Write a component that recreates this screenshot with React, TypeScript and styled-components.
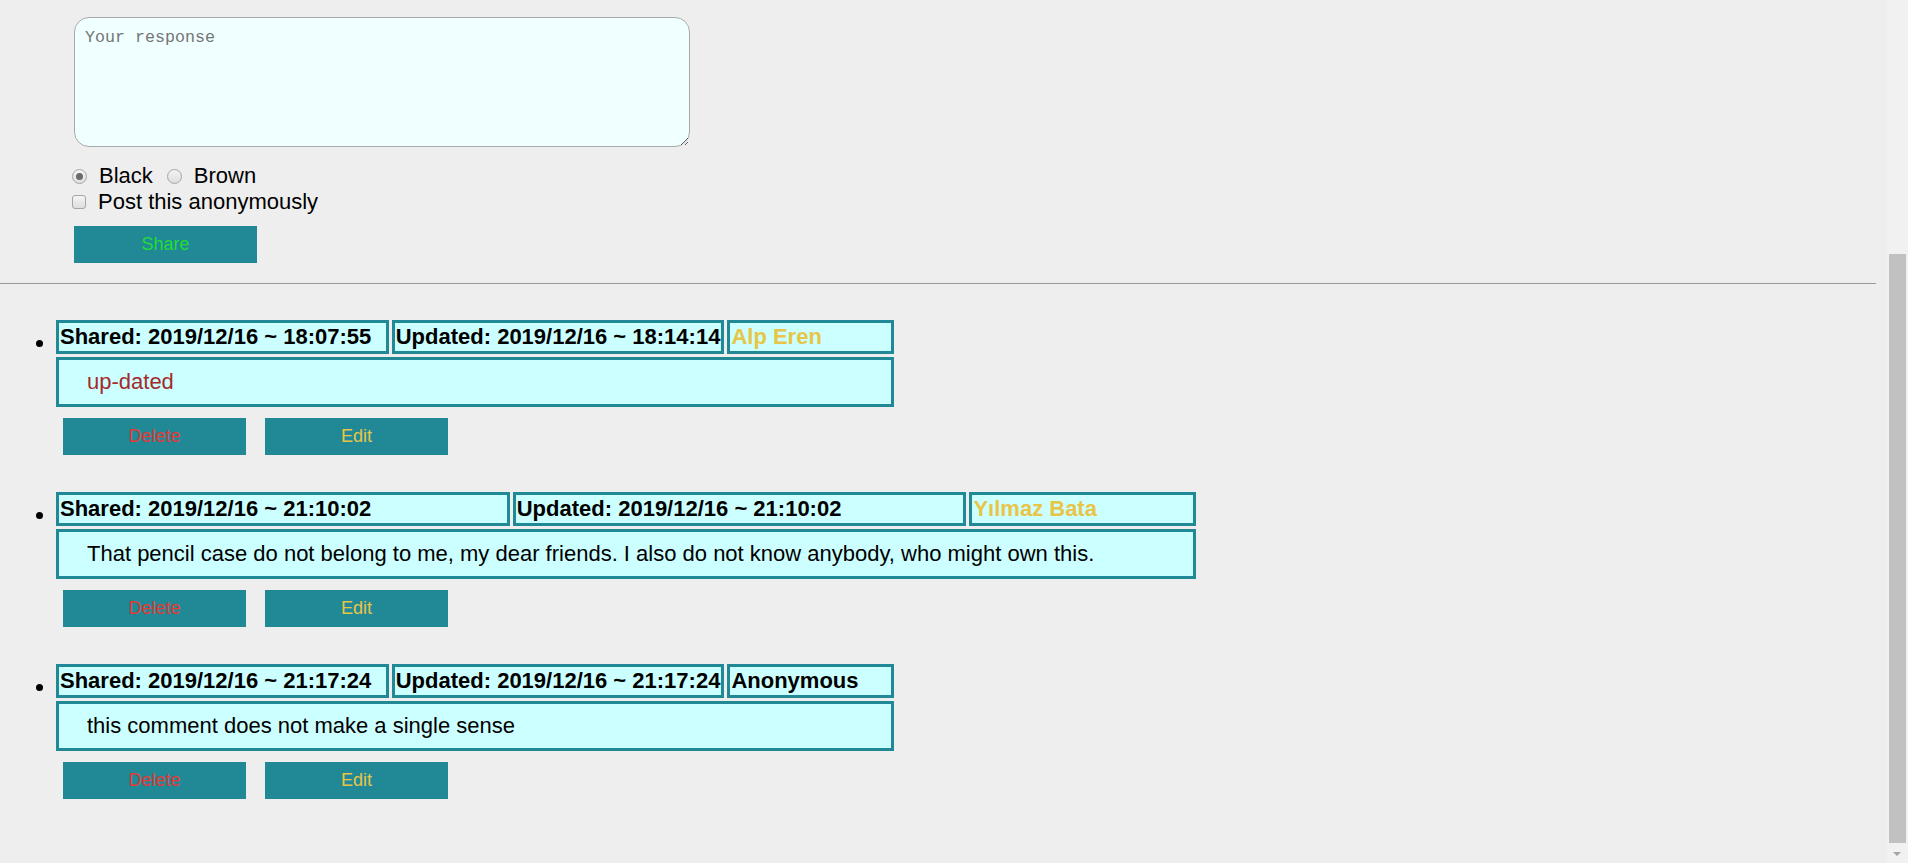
import React from "react";
import styled, { createGlobalStyle } from "styled-components";

const GlobalStyle = createGlobalStyle`
    html, body {
        background: #eeeeee;
    }
    body {
        margin: 0;
        font-family: "Liberation Sans", Arial, sans-serif;
        color: #000;
    }
`;

const TEAL = "#218896";

const FormSection = styled.div`
    display: flex;
    flex-direction: column;
    align-items: flex-start;
    padding: 17px 0 0 74px;
`;

const ResponseBox = styled.textarea`
    box-sizing: border-box;
    width: 616px;
    height: 130px;
    padding: 10px;
    border: 1px solid #a9a9a9;
    border-radius: 15px;
    background: #f0ffff;
    font-family: "Liberation Mono", "Courier New", monospace;
    font-size: 16.67px;
    resize: both;
    outline: none;

    &::placeholder {
        color: #757575;
    }
`;

const OptionRow = styled.div<{ $top?: number }>`
    display: flex;
    align-items: center;
    margin: ${(p) => p.$top ?? 0}px 0 0 -2px;
    height: 26px;
    font-size: 22px;
    line-height: 26px;
`;

const OptionLabel = styled.label`
    display: flex;
    align-items: center;
    gap: 12px;
    margin-right: 14px;
`;

// old-style grey form controls
const Radio = styled.input.attrs({ type: "radio" })`
    appearance: none;
    box-sizing: border-box;
    width: 15px;
    height: 15px;
    margin: 0;
    border: 1px solid #a6a6a6;
    border-radius: 50%;
    background: linear-gradient(#f4f4f4, #dedede);
    display: grid;
    place-items: center;

    &:checked::after {
        content: "";
        width: 7px;
        height: 7px;
        border-radius: 50%;
        background: #6a6a6a;
    }
`;

const Check = styled.input.attrs({ type: "checkbox" })`
    appearance: none;
    box-sizing: border-box;
    width: 14px;
    height: 14px;
    margin: 0;
    border: 1px solid #a6a6a6;
    border-radius: 3px;
    background: linear-gradient(#f4f4f4, #dedede);
`;

const ActionButton = styled.button<{ $color: string }>`
    width: 183px;
    height: 37px;
    border: none;
    background: ${TEAL};
    color: ${(p) => p.$color};
    font-family: "Liberation Sans", Arial, sans-serif;
    font-size: 18px;
    cursor: pointer;
`;

const ShareButton = styled(ActionButton)`
    margin-top: 11px;
`;

const Divider = styled.hr`
    margin: 20px 32px 0 0;
    border: none;
    border-top: 1px solid #999999;
    height: 0;
`;

const CommentList = styled.ul`
    margin: 0;
    padding: 36px 0 60px 56px;
    list-style: disc;
    font-size: 22px;
`;

const CommentItem = styled.li`
    margin-bottom: 37px;
`;

const CommentTable = styled.table`
    border-spacing: 3px;
    margin: -3px 0 0 -3px;
`;

const MetaCell = styled.td<{ $color?: string }>`
    border: 3px solid ${TEAL};
    background: #ccffff;
    padding: 1px;
    font-weight: bold;
    white-space: nowrap;
    color: ${(p) => p.$color ?? "#000"};
`;

const BodyCell = styled.td<{ $color?: string }>`
    border: 3px solid ${TEAL};
    background: #ccffff;
    padding: 9px 99px 9px 28px;
    color: ${(p) => p.$color ?? "#000"};
    white-space: nowrap;
`;

const ButtonRow = styled.div`
    display: flex;
    gap: 19px;
    margin: 8px 0 0 7px;
`;

// window scrollbar as it appears in the capture
const ScrollTrack = styled.div`
    position: fixed;
    top: 0;
    right: 0;
    bottom: 0;
    width: 21px;
    background: #f1f1f1;
`;

const ScrollThumb = styled.div`
    position: absolute;
    top: 254px;
    left: 2px;
    width: 17px;
    height: 589px;
    background: #c1c1c1;
`;

const ScrollArrow = styled.div`
    position: absolute;
    bottom: 7px;
    left: 6px;
    width: 0;
    height: 0;
    border-left: 4.5px solid transparent;
    border-right: 4.5px solid transparent;
    border-top: 4.5px solid #a3a3a3;
`;

type Comment = {
    shared: string;
    updated: string;
    author: string;
    authorColor?: string;
    text: string;
    textColor?: string;
};

const comments: Comment[] = [
    {
        shared: "2019/12/16 ~ 18:07:55",
        updated: "2019/12/16 ~ 18:14:14",
        author: "Alp Eren",
        authorColor: "#e8c547",
        text: "up-dated",
        textColor: "#a52a2a",
    },
    {
        shared: "2019/12/16 ~ 21:10:02",
        updated: "2019/12/16 ~ 21:10:02",
        author: "Yılmaz Bata",
        authorColor: "#e8c547",
        text: "That pencil case do not belong to me, my dear friends. I also do not know anybody, who might own this.",
    },
    {
        shared: "2019/12/16 ~ 21:17:24",
        updated: "2019/12/16 ~ 21:17:24",
        author: "Anonymous",
        text: "this comment does not make a single sense",
    },
];

const App: React.FC = () => {
    return (
        <>
            <GlobalStyle />
            <FormSection>
                <ResponseBox placeholder="Your response" />
                <OptionRow $top={16}>
                    <OptionLabel>
                        <Radio name="color" defaultChecked />
                        Black
                    </OptionLabel>
                    <OptionLabel>
                        <Radio name="color" />
                        Brown
                    </OptionLabel>
                </OptionRow>
                <OptionRow>
                    <OptionLabel>
                        <Check />
                        Post this anonymously
                    </OptionLabel>
                </OptionRow>
                <ShareButton $color="#22dd33">Share</ShareButton>
            </FormSection>
            <Divider />
            <CommentList>
                {comments.map((c) => (
                    <CommentItem key={c.shared + c.author}>
                        <CommentTable>
                            <tbody>
                                <tr>
                                    <MetaCell width="40%">Shared: {c.shared}</MetaCell>
                                    <MetaCell width="40%">Updated: {c.updated}</MetaCell>
                                    <MetaCell width="20%" $color={c.authorColor}>
                                        {c.author}
                                    </MetaCell>
                                </tr>
                                <tr>
                                    <BodyCell colSpan={3} $color={c.textColor}>
                                        {c.text}
                                    </BodyCell>
                                </tr>
                            </tbody>
                        </CommentTable>
                        <ButtonRow>
                            <ActionButton $color="#e53935">Delete</ActionButton>
                            <ActionButton $color="#e8c547">Edit</ActionButton>
                        </ButtonRow>
                    </CommentItem>
                ))}
            </CommentList>
            <ScrollTrack>
                <ScrollThumb />
                <ScrollArrow />
            </ScrollTrack>
        </>
    );
};

export default App;
